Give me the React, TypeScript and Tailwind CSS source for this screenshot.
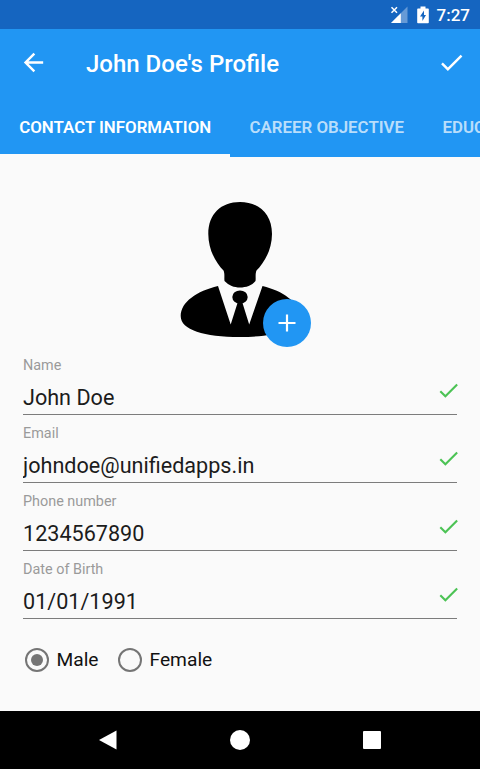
import { useState } from "react";

interface Field {
  label: string;
  value: string;
}

const tabs = ["Contact Information", "Career Objective", "Education"];

const initialFields: Field[] = [
  { label: "Name", value: "John Doe" },
  { label: "Email", value: "johndoe@unifiedapps.in" },
  { label: "Phone number", value: "1234567890" },
  { label: "Date of Birth", value: "01/01/1991" },
];

function CheckIcon({ className }: { className?: string }) {
  return (
    <svg viewBox="0 0 24 24" fill="currentColor" className={className}>
      <path d="M9 16.17 4.83 12l-1.42 1.41L9 19 21 7l-1.41-1.41z" />
    </svg>
  );
}

function StatusBar() {
  return (
    <div className="flex h-[29px] items-center justify-end bg-[#1565c0] pt-px pr-[10px] text-white">
      <svg viewBox="0 0 18 18" className="mr-[9px] h-[18px] w-[18px]">
        <path d="M17.5 0.5V17H1z" fill="#fff" fillOpacity="0.35" />
        <path d="M10.800 7.200V17H1z" fill="#fff" />
        <path d="M1.500 1.300l5.500 5.500M7 1.300L1.500 6.800" stroke="#fff" strokeWidth="1.500" />
      </svg>
      <svg viewBox="0 0 12 18" className="mr-[8px] h-[18px] w-3">
        <path
          d="M3.500 0.500h5v2H11a.8.8 0 0 1 .8.8V16.500a.8.8 0 0 1-.8.8H1a.8.8 0 0 1-.8-.8V3.300a.8.8 0 0 1 .8-.8h2.500z"
          fill="#fff"
        />
        <path d="M7 4.500L3 10.500h2.400V15L9 9H7z" fill="#1565c0" />
      </svg>
      <span className="text-[17px] leading-none font-medium">7:27</span>
    </div>
  );
}

function Avatar() {
  return (
    <div className="relative h-[150px] w-[132px]">
      <svg viewBox="180 200 132 150" className="h-[150px] w-[132px]">
        <path d="M240 202C221 202 208.300 214 208.300 234C208.300 251 217 264 223.500 270.500C225 274 224 278 224.500 281C229 285.500 234 287.500 240 287.500C246 287.500 252 285.500 255.500 281C256 278 255 274 256.500 270.500C263 264 272 251 272 234C272 214 259 202 240 202z" />
        <path d="M218 286C197 291 180.700 302 180.700 316C180.700 330 204 337 240 337C275 337 299 330 299 316C299 302 283 291 262.500 286L249.200 324.500L242.500 303H237.500L230.700 324.500z" />
        <ellipse cx="240" cy="297" rx="7.700" ry="6.600" />
      </svg>
      <button className="absolute right-[1px] bottom-[3px] flex h-12 w-12 items-center justify-center rounded-full bg-[#2196f3]">
        <svg viewBox="0 0 18 18" className="h-[18px] w-[18px]">
          <path d="M9 0.500v17M0.500 9h17" stroke="#fff" strokeWidth="2.200" />
        </svg>
      </button>
    </div>
  );
}

function Radio({ label, checked, onSelect }: { label: string; checked: boolean; onSelect: () => void }) {
  return (
    <button onClick={onSelect} className="flex items-center gap-[7.500px]">
      <span className="flex h-6 w-6 items-center justify-center rounded-full border-[2.400px] border-[#757575]">
        {checked && <span className="h-3 w-3 rounded-full bg-[#757575]" />}
      </span>
      <span className="pt-px text-[19.200px] leading-6 text-[#111111]">{label}</span>
    </button>
  );
}

export default function App() {
  const [activeTab, setActiveTab] = useState(0);
  const [fields, setFields] = useState<Field[]>(initialFields);
  const [gender, setGender] = useState("Male");

  const updateField = (index: number, value: string) => {
    setFields(fields.map((field, i) => (i === index ? { ...field, value } : field)));
  };

  return (
    <div className="flex h-[769px] w-[480px] flex-col overflow-hidden bg-[#fafafa] font-['Roboto',sans-serif]">
      <StatusBar />

      <header className="h-32 bg-[#2196f3] text-white">
        <div className="flex h-[67px] items-center pr-[14px] pl-[19px]">
          <svg viewBox="0 0 24 24" fill="currentColor" className="h-[29px] w-[29px]">
            <path d="M20 11H7.830l5.590-5.590L12 4l-8 8 8 8 1.410-1.410L7.830 13H20v-2z" />
          </svg>
          <h1 className="ml-[38px] flex-1 pt-[2px] text-2xl font-medium">John Doe's Profile</h1>
          <CheckIcon className="h-[29px] w-[29px]" />
        </div>
        <nav className="flex h-[61px] overflow-hidden">
          {tabs.map((tab, i) => (
            <button
              key={tab}
              onClick={() => setActiveTab(i)}
              className={`shrink-0 border-b-[3px] px-[19.200px] pt-[6px] text-[16.850px] font-semibold whitespace-nowrap uppercase ${
                i === activeTab ? "border-[#fafafa] text-white" : "border-transparent text-white/70"
              }`}
            >
              {tab}
            </button>
          ))}
        </nav>
      </header>

      <main className="flex-1 px-[23px] pt-[43px]">
        <div className="flex justify-center pl-[12px]">
          <Avatar />
        </div>

        <div className="mt-[6px] flex flex-col gap-[9px]">
          {fields.map((field, i) => (
            <label key={field.label} className="flex h-[59px] flex-col border-b border-[#7c7c7c]">
              <span className="pt-px text-[14.400px] leading-[18px] text-[#9a9a9a]">{field.label}</span>
              <span className="flex flex-1 items-center">
                <input
                  value={field.value}
                  onChange={(e) => updateField(i, e.target.value)}
                  className="h-8 min-w-0 flex-1 pt-[8px] text-[21.600px] text-[#1c1c1c] outline-none"
                />
                <CheckIcon className="mr-[-4px] mb-[8px] h-[25px] w-[25px] text-[#4cc355]" />
              </span>
            </label>
          ))}
        </div>

        <div className="mt-[28px] ml-[2px] flex gap-[19.500px]">
          {["Male", "Female"].map((option) => (
            <Radio key={option} label={option} checked={gender === option} onSelect={() => setGender(option)} />
          ))}
        </div>
      </main>

      <footer className="flex h-[58px] items-center justify-between bg-black pr-[99px] pl-[97px]">
        <svg viewBox="0 0 20 20" className="h-5 w-5" fill="#fff">
          <path d="M19.500 0.500v19L2 10z" />
        </svg>
        <span className="h-5 w-5 rounded-full bg-white" />
        <span className="h-[18px] w-[18px] rounded-[1px] bg-white" />
      </footer>
    </div>
  );
}
